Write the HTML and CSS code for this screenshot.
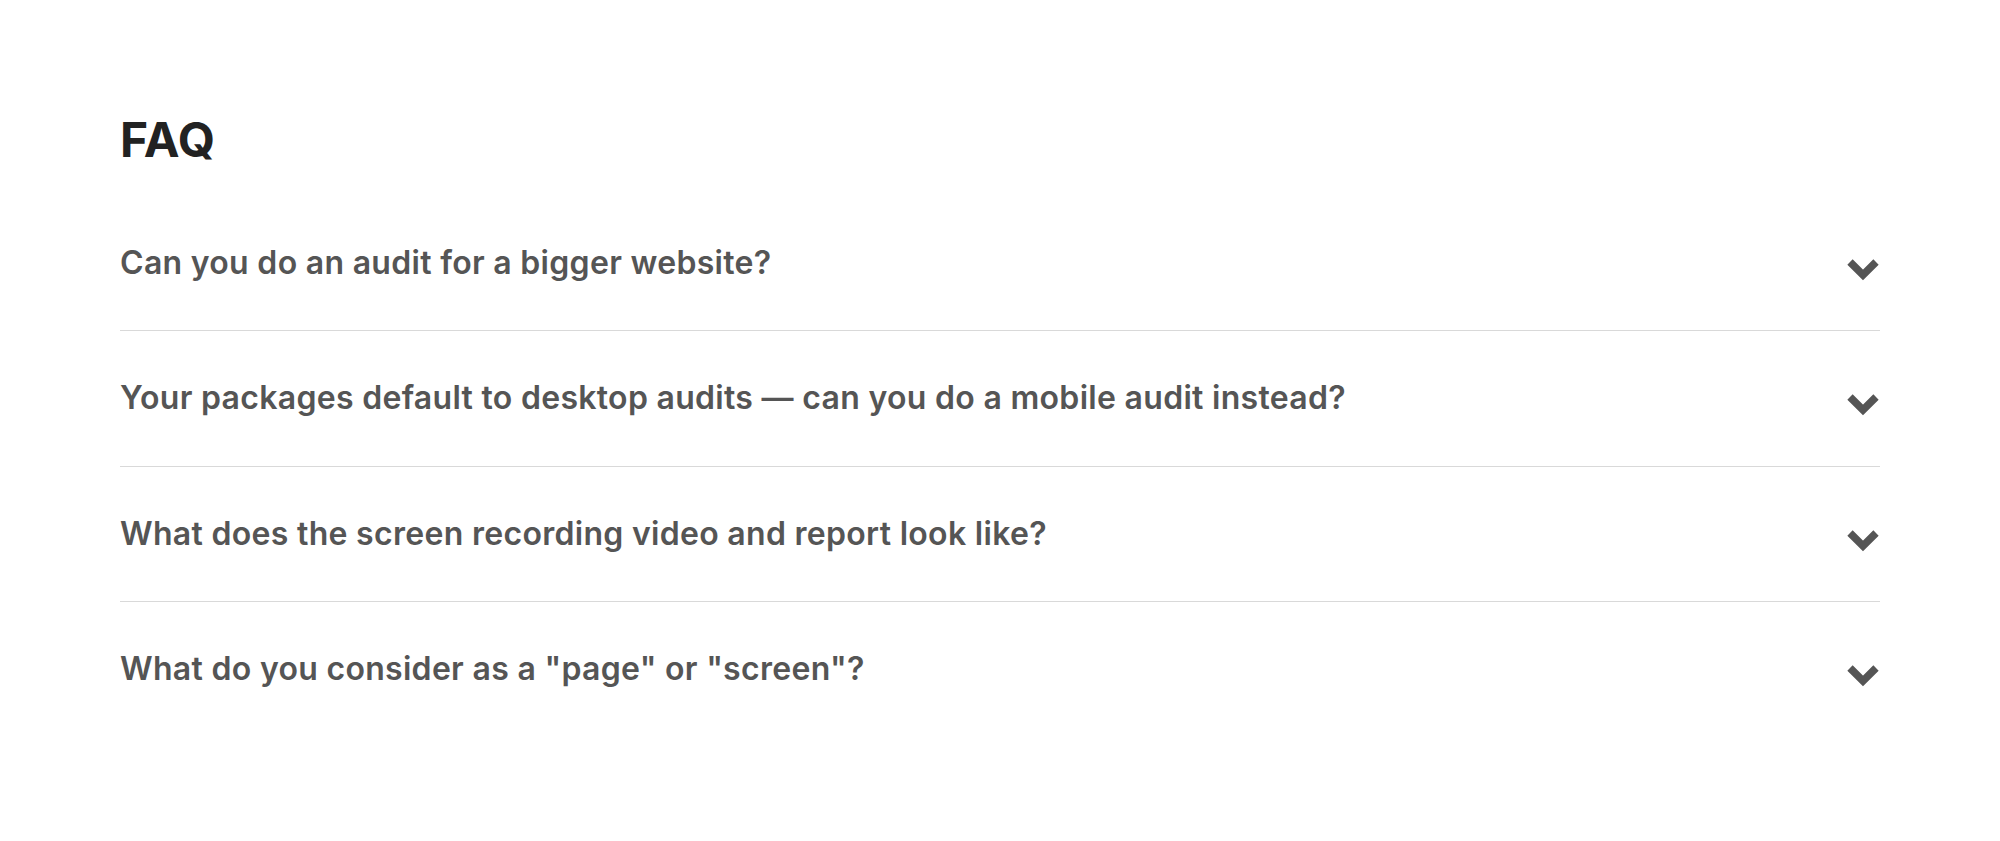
FILE: index.html
```html
<!DOCTYPE html>
<html lang="en">
<head>
<meta charset="utf-8">
<title>FAQ</title>
<link rel="stylesheet" href="styles.css">
</head>
<body>
<section class="faq">
  <h2 class="faq-title">FAQ</h2>
  <div class="faq-list">
    <div class="faq-item">
      <span class="faq-q">Can you do an audit for a bigger website?</span>
      <svg class="chev" viewBox="0 0 32 23" width="32" height="23"><path d="M3 4 L16 17 L29 4"/></svg>
    </div>
    <div class="faq-item">
      <span class="faq-q">Your packages default to desktop audits — can you do a mobile audit instead?</span>
      <svg class="chev" viewBox="0 0 32 23" width="32" height="23"><path d="M3 4 L16 17 L29 4"/></svg>
    </div>
    <div class="faq-item">
      <span class="faq-q">What does the screen recording video and report look like?</span>
      <svg class="chev" viewBox="0 0 32 23" width="32" height="23"><path d="M3 4 L16 17 L29 4"/></svg>
    </div>
    <div class="faq-item">
      <span class="faq-q">What do you consider as a "page" or "screen"?</span>
      <svg class="chev" viewBox="0 0 32 23" width="32" height="23"><path d="M3 4 L16 17 L29 4"/></svg>
    </div>
  </div>
</section>
</body>
</html>
```
FILE: styles.css
```css
html, body {
  margin: 0;
  padding: 0;
  background: #ffffff;
}
body {
  font-family: Inter, "Liberation Sans", sans-serif;
}
.faq {
  padding: 111px 120px 0 120px;
}
.faq-title {
  margin: 0;
  font-size: 48px;
  font-weight: 700;
  line-height: 58px;
  color: #222222;
}
.faq-list {
  margin-top: 27px;
}
.faq-item {
  display: flex;
  align-items: center;
  justify-content: space-between;
  padding: 48px 0;
  border-bottom: 1px solid #d9d9d9;
}
.faq-item:last-child {
  border-bottom: none;
}
.faq-q {
  font-size: 32px;
  font-weight: 600;
  line-height: 38.4px;
  letter-spacing: 0.3px;
  color: #555555;
}
.chev {
  flex: none;
  margin-top: 12px;
  margin-right: 1px;
  fill: none;
  stroke: #555555;
  stroke-width: 7.5;
  stroke-linecap: butt;
  stroke-linejoin: miter;
}
```
